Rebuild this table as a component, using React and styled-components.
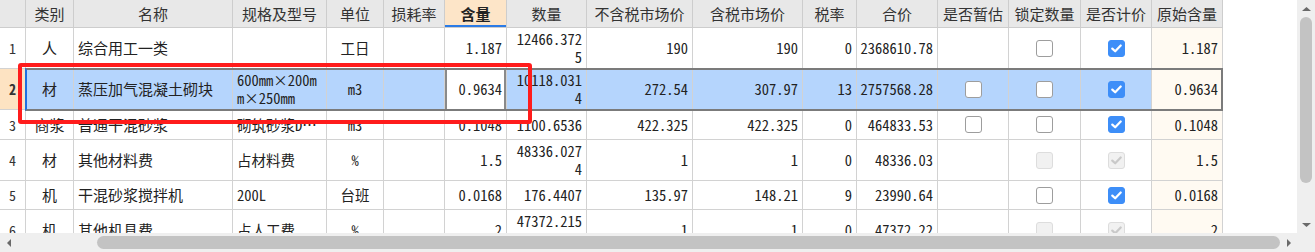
import React from "react";
import styled, { createGlobalStyle, css } from "styled-components";

const CJK = `"Noto Sans CJK SC", "Noto Sans", sans-serif`;
const MONO = `"Noto Sans Mono CJK SC", "Liberation Mono", monospace`;

const GlobalStyle = createGlobalStyle`
  html, body { margin: 0; padding: 0; background: #fff; }
  body { font-family: ${CJK}; color: #222; }
`;

const columns = [
  { key: "type", title: "类别", w: 48, align: "center", font: "cjk" },
  { key: "name", title: "名称", w: 159, align: "left", font: "cjk" },
  { key: "spec", title: "规格及型号", w: 94, align: "left", font: "mono" },
  { key: "unit", title: "单位", w: 57, align: "center", font: "mono" },
  { key: "loss", title: "损耗率", w: 61, align: "right", font: "mono" },
  { key: "qty", title: "含量", w: 62, align: "right", font: "mono", active: true },
  { key: "amount", title: "数量", w: 80, align: "right", font: "mono", pad: "0 4px" },
  { key: "ex", title: "不含税市场价", w: 106, align: "right", font: "mono" },
  { key: "inc", title: "含税市场价", w: 110, align: "right", font: "mono" },
  { key: "tax", title: "税率", w: 54, align: "right", font: "mono" },
  { key: "total", title: "合价", w: 81, align: "right", font: "mono", pad: "0 4px 0 1px" },
  { key: "est", title: "是否暂估", w: 71, check: true },
  { key: "lock", title: "锁定数量", w: 72, check: true },
  { key: "priced", title: "是否计价", w: 71, check: true },
  { key: "orig", title: "原始含量", w: 71, align: "right", font: "mono", tint: true },
];

const GRID = ["26px", ...columns.map((c) => `${c.w}px`)].join(" ");

const rows = [
  { n: 1, h: 41, type: "人", name: "综合用工一类", spec: "", unit: "工日", loss: "", qty: "1.187", amount: "12466.3725", ex: "190", inc: "190", tax: "0", total: "2368610.78", est: null, lock: "off", priced: "on", orig: "1.187" },
  { n: 2, h: 41, selected: true, type: "材", name: "蒸压加气混凝土砌块", spec: "600mm×200mm×250mm", unit: "m3", loss: "", qty: "0.9634", amount: "10118.0314", ex: "272.54", inc: "307.97", tax: "13", total: "2757568.28", est: "off", lock: "off", priced: "on", orig: "0.9634" },
  { n: 3, h: 30, type: "商浆", name: "普通干混砂浆", spec: "砌筑砂浆DM M10", clip: true, unit: "m3", loss: "", qty: "0.1048", amount: "1100.6536", ex: "422.325", inc: "422.325", tax: "0", total: "464833.53", est: "off", lock: "off", priced: "on", orig: "0.1048" },
  { n: 4, h: 41, type: "材", name: "其他材料费", spec: "占材料费", unit: "%", loss: "", qty: "1.5", amount: "48336.0274", ex: "1", inc: "1", tax: "0", total: "48336.03", est: null, lock: "disOff", priced: "disOn", orig: "1.5" },
  { n: 5, h: 29, type: "机", name: "干混砂浆搅拌机", spec: "200L", unit: "台班", loss: "", qty: "0.0168", amount: "176.4407", ex: "135.97", inc: "148.21", tax: "9", total: "23990.64", est: null, lock: "off", priced: "on", orig: "0.0168" },
  { n: 6, h: 41, type: "机", name: "其他机具费", spec: "占人工费", unit: "%", loss: "", qty: "2", amount: "47372.2150", ex: "1", inc: "1", tax: "0", total: "47372.22", est: null, lock: "disOff", priced: "disOn", orig: "2" },
];

/* ---------- frame & scrollbars ---------- */

const Frame = styled.div`
  position: relative;
  width: 1315px;
  height: 252px;
  overflow: hidden;
  display: grid;
  grid-template-columns: 1297px 18px;
  grid-template-rows: 233px 19px;
  background: #fff;
`;

const Viewport = styled.div`
  overflow: hidden;
  background: #fff;
`;

const VScroll = styled.div`
  background: #efefef;
  display: flex;
  flex-direction: column;
  align-items: center;
`;

const HScroll = styled.div`
  background: #efefef;
  display: flex;
  align-items: center;
`;

const Corner = styled.div`
  background: #efefef;
`;

const ArrowBtn = styled.div`
  flex: none;
  width: ${(p) => (p.$horizontal ? "17px" : "18px")};
  height: ${(p) => (p.$horizontal ? "19px" : "17px")};
  display: flex;
  align-items: center;
  justify-content: center;
  color: #6a6a6a;
`;

const VTrack = styled.div`
  flex: 1;
  width: 100%;
  display: flex;
  justify-content: center;
`;

const VThumb = styled.div`
  width: 12px;
  height: 166px;
  border-radius: 6px;
  background: #c3c3c3;
`;

const HTrack = styled.div`
  flex: 1;
  height: 100%;
  display: flex;
  align-items: center;
  padding-left: 80px;
`;

const HThumb = styled.div`
  flex: 1;
  height: 13px;
  border-radius: 7px;
  background: #c3c3c3;
`;

const Tri = ({ dir }) => {
  const pts = {
    up: "0,4 4.5,0 9,4",
    down: "0,0 4.5,4 9,0",
    left: "4,0 0,4 4,8",
    right: "0,0 4,4 0,8",
  }[dir];
  const vertical = dir === "up" || dir === "down";
  return (
    <svg width={vertical ? 9 : 4} height={vertical ? 4 : 8} viewBox={vertical ? "0 0 9 4" : "0 0 4 8"}>
      <polygon points={pts} fill="currentColor" />
    </svg>
  );
};

/* ---------- table ---------- */

const Table = styled.div`
  width: 1223px;
  display: flex;
  flex-direction: column;
`;

const HeaderRow = styled.div`
  display: grid;
  grid-template-columns: ${GRID};
  height: 28px;
  flex: none;
`;

const HeadCell = styled.div`
  box-sizing: border-box;
  border-right: 1px solid #cdcdcd;
  border-bottom: 1px solid #cdcdcd;
  background: ${(p) => (p.$active ? "#fde5c8" : "#e8e8e8")};
  box-shadow: ${(p) => (p.$active ? "inset 0 -2px 0 #2b7be6" : "none")};
  display: flex;
  align-items: center;
  justify-content: center;
  font-family: ${CJK};
  font-size: 15px;
  font-weight: ${(p) => (p.$active ? 700 : 400)};
  color: ${(p) => (p.$active ? "#222" : "#333")};
  white-space: nowrap;
  overflow: hidden;
`;

const Row = styled.div`
  position: relative;
  flex: none;
  display: grid;
  grid-template-columns: ${GRID};
  height: ${(p) => p.$h}px;
  background: ${(p) => (p.$selected ? "#b5d5fd" : "#fff")};
  ${(p) =>
    p.$selected &&
    css`
      z-index: 1;
      &::after {
        content: "";
        position: absolute;
        left: 25px;
        right: 0;
        top: -1px;
        bottom: -1px;
        border: 2px solid #7b7b7b;
        border-left: 2px solid #1f6fe0;
        pointer-events: none;
      }
    `}
`;

const Cell = styled.div`
  box-sizing: border-box;
  border-right: 1px solid #d2d2d2;
  border-bottom: 1px solid #d2d2d2;
  padding: ${(p) => p.$pad || "0 4px"};
  display: flex;
  align-items: center;
  justify-content: ${(p) =>
    p.$align === "left" ? "flex-start" : p.$align === "right" ? "flex-end" : "center"};
  min-width: 0;
  overflow: hidden;
  background: ${(p) => (p.$editing ? "#fff" : p.$tint ? "#fffaf2" : "transparent")};
  ${(p) =>
    p.$editing &&
    css`
      box-shadow: inset 2px 0 0 #8a8a8a, inset -2px 0 0 #8a8a8a;
    `}
  font-family: ${(p) => (p.$font === "mono" ? MONO : CJK)};
  font-size: ${(p) => (p.$font === "mono" ? "14.5px" : "15px")};
  line-height: 18px;
  color: #222;
`;

const CellText = styled.span`
  display: block;
  min-width: 0;
  text-align: ${(p) => p.$align || "left"};
  word-break: break-all;
  ${(p) =>
    p.$clip &&
    css`
      white-space: nowrap;
      overflow: hidden;
      text-overflow: ellipsis;
    `}
`;

const NumCell = styled.div`
  box-sizing: border-box;
  border-right: 1px solid #d2d2d2;
  border-bottom: 1px solid #d2d2d2;
  display: flex;
  align-items: center;
  justify-content: center;
  background: ${(p) => (p.$selected ? "#fde3c2" : "#fff")};
  font-family: ${MONO};
  font-size: 14px;
  font-weight: ${(p) => (p.$selected ? 700 : 400)};
  color: #333;
`;

const Box = styled.span`
  box-sizing: border-box;
  width: 17px;
  height: 17px;
  border-radius: 3px;
  display: flex;
  align-items: center;
  justify-content: center;
  ${(p) => {
    switch (p.$state) {
      case "on":
        return css`
          background: #3d8ef8;
          border: 1px solid #3d8ef8;
          color: #fff;
        `;
      case "disOn":
        return css`
          background: #f1f1f1;
          border: 1px solid #dddddd;
          color: #c9c9c9;
        `;
      case "disOff":
        return css`
          background: #f1f1f1;
          border: 1px solid #dddddd;
        `;
      default:
        return css`
          background: #fff;
          border: 1.5px solid #9d9d9d;
        `;
    }
  }}
`;

const Checkbox = ({ state }) => (
  <Box $state={state}>
    {(state === "on" || state === "disOn") && (
      <svg width="11" height="9" viewBox="0 0 11 9">
        <polyline
          points="1.3,4.6 4.2,7.3 9.7,1.5"
          fill="none"
          stroke="currentColor"
          strokeWidth="2.2"
          strokeLinecap="round"
          strokeLinejoin="round"
        />
      </svg>
    )}
  </Box>
);

const Annotation = styled.div`
  position: absolute;
  left: 18px;
  top: 63px;
  width: 514px;
  height: 61px;
  box-sizing: border-box;
  border: 4px solid #ff1c1c;
  border-radius: 3px;
  pointer-events: none;
  z-index: 5;
`;

export default function App() {
  return (
    <>
      <GlobalStyle />
      <Frame>
        <Viewport>
          <Table>
            <HeaderRow>
              <HeadCell />
              {columns.map((c) => (
                <HeadCell key={c.key} $active={c.active}>
                  {c.title}
                </HeadCell>
              ))}
            </HeaderRow>
            {rows.map((r) => (
              <Row key={r.n} $h={r.h} $selected={r.selected}>
                <NumCell $selected={r.selected}>{r.n}</NumCell>
                {columns.map((c) => {
                  if (c.check) {
                    return (
                      <Cell key={c.key} $align="center">
                        {r[c.key] && <Checkbox state={r[c.key]} />}
                      </Cell>
                    );
                  }
                  return (
                    <Cell
                      key={c.key}
                      $align={c.align}
                      $font={c.font}
                      $pad={c.pad}
                      $tint={c.tint}
                      $editing={r.selected && c.active}
                    >
                      <CellText $align={c.align} $clip={c.key === "spec" && r.clip}>
                        {r[c.key]}
                      </CellText>
                    </Cell>
                  );
                })}
              </Row>
            ))}
          </Table>
        </Viewport>
        <VScroll>
          <ArrowBtn>
            <Tri dir="up" />
          </ArrowBtn>
          <VTrack>
            <VThumb />
          </VTrack>
          <ArrowBtn>
            <Tri dir="down" />
          </ArrowBtn>
        </VScroll>
        <HScroll>
          <ArrowBtn $horizontal>
            <Tri dir="left" />
          </ArrowBtn>
          <HTrack>
            <HThumb />
          </HTrack>
          <ArrowBtn $horizontal>
            <Tri dir="right" />
          </ArrowBtn>
        </HScroll>
        <Corner />
        <Annotation />
      </Frame>
    </>
  );
}
